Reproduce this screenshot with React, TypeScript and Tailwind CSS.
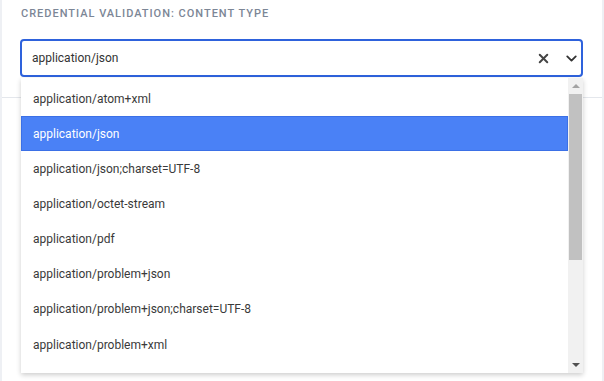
import { X, ChevronDown } from "lucide-react";

const options = [
    "application/atom+xml",
    "application/json",
    "application/json;charset=UTF-8",
    "application/octet-stream",
    "application/pdf",
    "application/problem+json",
    "application/problem+json;charset=UTF-8",
    "application/problem+xml",
];

export default function App() {
    const selected = "application/json";

    return (
        <div className="w-[604px] h-[381px] bg-[#eef0f4] px-[2px] overflow-hidden font-['Roboto',sans-serif]">
            <div className="relative h-full bg-white">
                {/* Field label */}
                <div className="pl-[19px] pt-[7px] text-[11px] font-medium tracking-[0.09em] text-[#7c8696] uppercase leading-[14px]">
                    Credential validation: Content type
                </div>

                {/* Select input */}
                <div className="mt-[18px] ml-[18px] w-[563px] h-[38px] flex items-center rounded-[4px] border-2 border-[#2e62dc] pl-[10px]">
                    <span className="flex-1 text-[12px] text-[#333]">{selected}</span>
                    <X className="w-[15px] h-[15px] text-[#444] mr-[12px]" strokeWidth={3.2} />
                    <ChevronDown className="w-[17px] h-[17px] text-[#333] mr-[1px]" strokeWidth={2.6} />
                </div>

                {/* divider behind the menu */}
                <div className="mt-[20px] border-b border-[#e4e7ec]" />

                {/* Dropdown menu */}
                <div className="absolute left-[19px] top-[78px] w-[562px] h-[295px] flex bg-white shadow-[0_2px_5px_rgba(0,0,0,0.2)] overflow-hidden">
                    <div className="flex-1 pt-[3px]">
                        {options.map((opt) => (
                            <div
                                key={opt}
                                className={
                                    opt === selected
                                        ? "h-[35.15px] flex items-center pl-[11px] text-[12px] text-white bg-[#4a81f6] border border-[#3b70e6]"
                                        : "h-[35.15px] flex items-center pl-[12px] text-[12px] text-[#3a3a3a]"
                                }
                            >
                                {opt}
                            </div>
                        ))}
                    </div>
                    {/* scrollbar */}
                    <div className="w-[15px] bg-[#f1f1f1] flex flex-col items-center">
                        <div className="h-[16px] flex items-center justify-center">
                            <div className="w-0 h-0 border-l-[4px] border-r-[4px] border-b-[4px] border-l-transparent border-r-transparent border-b-[#a3a3a3]" />
                        </div>
                        <div className="w-[13px] h-[166px] bg-[#c1c1c1]" />
                        <div className="flex-1" />
                        <div className="h-[16px] flex items-center justify-center">
                            <div className="w-0 h-0 border-l-[4px] border-r-[4px] border-t-[4px] border-l-transparent border-r-transparent border-t-[#505050]" />
                        </div>
                    </div>
                </div>
            </div>
        </div>
    );
}
